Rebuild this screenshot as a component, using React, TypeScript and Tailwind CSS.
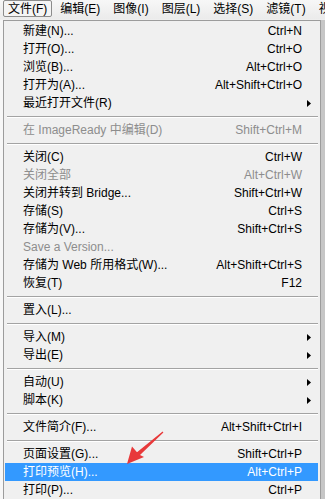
import React from "react";

type Item =
  | { label: string; shortcut?: string; disabled?: boolean; sub?: boolean; active?: boolean }
  | "sep";

const menus = ["文件(F)", "编辑(E)", "图像(I)", "图层(L)", "选择(S)", "滤镜(T)", "视图(V)"];

const items: Item[] = [
  { label: "新建(N)...", shortcut: "Ctrl+N" },
  { label: "打开(O)...", shortcut: "Ctrl+O" },
  { label: "浏览(B)...", shortcut: "Alt+Ctrl+O" },
  { label: "打开为(A)...", shortcut: "Alt+Shift+Ctrl+O" },
  { label: "最近打开文件(R)", sub: true },
  "sep",
  { label: "在 ImageReady 中编辑(D)", shortcut: "Shift+Ctrl+M", disabled: true },
  "sep",
  { label: "关闭(C)", shortcut: "Ctrl+W" },
  { label: "关闭全部", shortcut: "Alt+Ctrl+W", disabled: true },
  { label: "关闭并转到 Bridge...", shortcut: "Shift+Ctrl+W" },
  { label: "存储(S)", shortcut: "Ctrl+S" },
  { label: "存储为(V)...", shortcut: "Shift+Ctrl+S" },
  { label: "Save a Version...", disabled: true },
  { label: "存储为 Web 所用格式(W)...", shortcut: "Alt+Shift+Ctrl+S" },
  { label: "恢复(T)", shortcut: "F12" },
  "sep",
  { label: "置入(L)..." },
  "sep",
  { label: "导入(M)", sub: true },
  { label: "导出(E)", sub: true },
  "sep",
  { label: "自动(U)", sub: true },
  { label: "脚本(K)", sub: true },
  "sep",
  { label: "文件简介(F)...", shortcut: "Alt+Shift+Ctrl+I" },
  "sep",
  { label: "页面设置(G)...", shortcut: "Shift+Ctrl+P" },
  { label: "打印预览(H)...", shortcut: "Alt+Ctrl+P", active: true },
  { label: "打印(P)...", shortcut: "Ctrl+P" },
];

const SubArrow = () => (
  <svg width="4" height="7" viewBox="0 0 4 7">
    <path d="M0 0 L4 3.5 L0 7 Z" fill="#000" />
  </svg>
);

const App = () => {
  return (
    <div className="relative w-[325px] h-[499px] overflow-hidden bg-[#eeeeee] text-[12px] leading-none text-black font-['Liberation_Sans','Noto_Sans_CJK_SC',sans-serif]">
      {/* Menu bar */}
      <div className="flex h-[19px] items-start gap-[3px] pl-[3px] bg-gradient-to-b from-[#f7f7f7] to-[#ebebeb] whitespace-nowrap">
        {menus.map((m, i) => (
          <div
            key={m}
            className={
              i === 0
                ? "h-[17px] shrink-0 flex items-center pl-[4px] pr-[4px] border border-[#8c8c8c] rounded-[2px] bg-[#f4f4f4]"
                : "h-[17px] shrink-0 flex items-center pl-[4px] pr-[4px] border border-transparent"
            }
          >
            {m}
          </div>
        ))}
      </div>

      <div className="flex h-[480px] mt-[1px]">
        {/* window behind, left edge */}
        <div className="w-[3px] bg-[#f7f7f7]" />

        {/* Dropdown panel */}
        <div className="w-[318px] border border-[#9c9c9c] bg-[#f0f0f0] pt-[1px] pl-[1px] pr-[2px]">
          {items.map((it, i) =>
            it === "sep" ? (
              <div key={i} className="h-[9px] flex items-center pl-[2px]">
                <div className="w-full h-[2px] border-t border-[#a3a3a3] border-b border-b-white" />
              </div>
            ) : (
              <div
                key={i}
                className={
                  "h-[18px] flex items-center pl-[18px] " +
                  (it.active ? "bg-[#3399ff] text-white" : it.disabled ? "text-[#8d8d8d]" : "")
                }
              >
                <span className="flex-1 whitespace-nowrap">{it.label}</span>
                {it.shortcut && <span className="whitespace-nowrap">{it.shortcut}</span>}
                <span className="w-[16px] flex items-center pl-[5px]">{it.sub && <SubArrow />}</span>
              </div>
            )
          )}
        </div>

        {/* shadow strip */}
        <div className="flex-1 bg-[#c6c6c6]" />
      </div>

      {/* Red annotation arrow */}
      <svg className="absolute left-0 top-0 pointer-events-none" width="325" height="499">
        <polygon
          points="127,464 144,457 140,455 163.4,432.6 162.6,431.4 137,452.2 132,446.5"
          fill="#e8393a"
        />
      </svg>
    </div>
  );
};

export default App;
